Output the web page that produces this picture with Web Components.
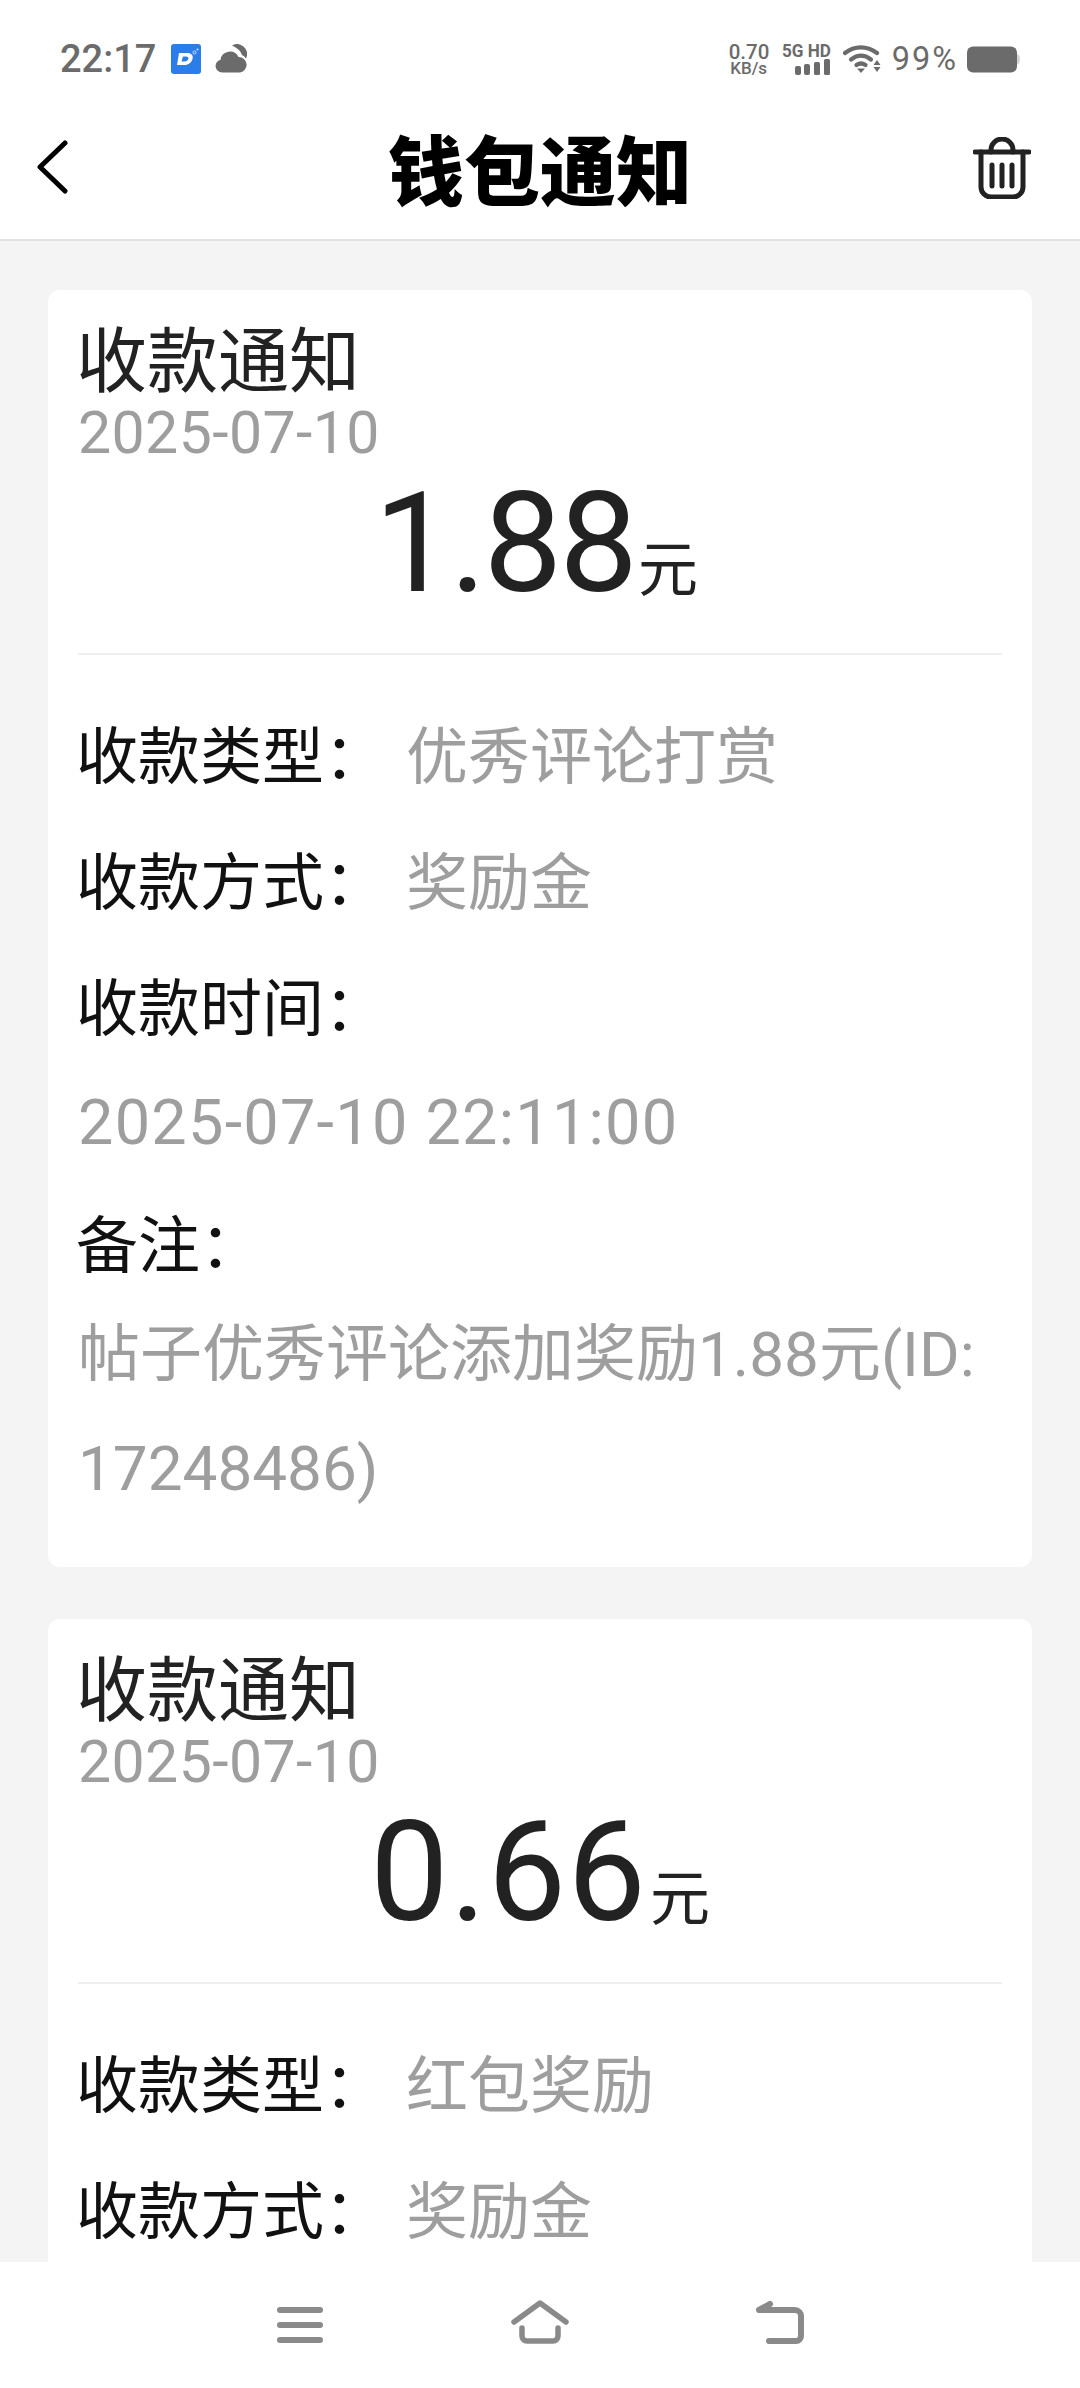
<!DOCTYPE html>
<html lang="zh">
<head>
<meta charset="utf-8">
<title>钱包通知</title>
<style>
  html, body { margin: 0; padding: 0; }
  body { width: 1080px; height: 2388px; overflow: hidden; font-family: Roboto, "Noto Sans CJK SC", sans-serif; }
  wallet-app { height: 2388px; }
</style>
</head>
<body>
<wallet-app>
  <status-bar slot="status"></status-bar>
  <app-header slot="header" title="钱包通知"></app-header>
  <notice-card amount="1.88" date="2025-07-10" tracking="-3px" nudge="8px">
    <notice-row label="收款类型：" value="优秀评论打赏"></notice-row>
    <notice-row label="收款方式：" value="奖励金"></notice-row>
    <notice-row label="收款时间："></notice-row>
    <notice-note wide>2025-07-10 22:11:00</notice-note>
    <notice-row label="备注："></notice-row>
    <notice-note tight>帖子优秀评论添加奖励1.88元(ID:17248486)</notice-note>
  </notice-card>
  <notice-card amount="0.66" date="2025-07-10" tracking="1px">
    <notice-row label="收款类型：" value="红包奖励"></notice-row>
    <notice-row label="收款方式：" value="奖励金"></notice-row>
  </notice-card>
  <nav-bar slot="nav"></nav-bar>
</wallet-app>

<script>
const CJK = `Roboto, "Noto Sans CJK SC", sans-serif`;

class WalletApp extends HTMLElement {
  constructor() {
    super();
    this.attachShadow({ mode: "open" });
    this.shadowRoot.innerHTML = `
      <style>
        :host { display: flex; flex-direction: column; background: #f4f4f4; }
        main {
          flex: 1;
          min-height: 0;
          overflow: hidden;
          padding: 49px 48px 0;
          display: flex;
          flex-direction: column;
          gap: 52px;
        }
      </style>
      <slot name="status"></slot>
      <slot name="header"></slot>
      <main><slot></slot></main>
      <slot name="nav"></slot>
    `;
  }
}

class StatusBar extends HTMLElement {
  constructor() {
    super();
    this.attachShadow({ mode: "open" });
    this.shadowRoot.innerHTML = `
      <style>
        :host {
          display: flex;
          height: 100px;
          box-sizing: border-box;
          padding: 18px 60px 0 60px;
          align-items: center;
          justify-content: space-between;
          background: #fff;
          color: #6b6b6b;
          font-family: Roboto, sans-serif;
        }
        .side { display: flex; align-items: center; }
        .time { font-size: 38px; font-weight: 500; }
        .app { margin-left: 15px; width: 30px; height: 30px; display: block; }
        .weather { margin-left: 14px; width: 32px; height: 30px; display: block; }
        .speed { width: 40px; font-size: 17px; font-weight: 500; line-height: 15px; text-align: center; white-space: nowrap; }
        .speed b { display: block; font-size: 20.500px; font-weight: 500; line-height: 18px; }
        .net { margin-left: 13px; width: 49px; }
        .net span { display: block; font-size: 18px; font-weight: 700; line-height: 16px; white-space: nowrap; transform: scaleX(.95); transform-origin: left; }
        .net svg { display: block; width: 49px; height: 16px; }
        .wifi { margin-left: 12px; width: 38px; height: 30px; display: block; }
        .pct { margin-left: 11px; font-size: 32.500px; letter-spacing: 2px; }
        .batt { margin-left: 9px; width: 53px; height: 27px; display: block; }
      </style>
      <div class="side">
        <span class="time">22:17</span>
        <svg class="app" viewBox="0 0 30 30">
          <rect width="30" height="30" rx="3" fill="#2b7de9"/>
          <path d="M8 9h8c4.500 0 6.500 2.500 5.500 6s-4 6-8 6H6zM12 12.500l-1.500 5h3c2 0 3.400-1 3.800-2.500s-.3-2.500-2.300-2.500z" fill="#fff" fill-rule="evenodd"/>
          <circle cx="23.500" cy="8.500" r="1.500" fill="none" stroke="#cfe6ff"/>
          <circle cx="26.500" cy="5.500" r="1" fill="#cfe6ff"/>
        </svg>
        <svg class="weather" viewBox="0 0 32 30" fill="#6b6b6b">
          <path d="M7 28.500a6.500 6.500 0 0 1-1.500-12.800A9.500 9.500 0 0 1 23.500 13a7.800 7.800 0 0 1 1.500 15.500z"/>
          <path d="M17 1.500a10 10 0 0 1 14 13q-1.500-2.500-4-3.500Q25 5 17 1.500z"/>
        </svg>
      </div>
      <div class="side">
        <div class="speed"><b>0.70</b>KB/s</div>
        <div class="net">
          <span>5G HD</span>
          <svg viewBox="0 0 49 16" fill="#6b6b6b">
            <rect x="13" y="7" width="6" height="9" rx="2"/>
            <rect x="22" y="5" width="6" height="11" rx="2"/>
            <rect x="32" y="3" width="6" height="13" rx="1.500"/>
            <rect x="42" y="0" width="6" height="16" rx="1.500"/>
          </svg>
        </div>
        <svg class="wifi" viewBox="0 0 38 30" fill="none" stroke="#6b6b6b" stroke-width="4.200" stroke-linecap="round">
          <path d="M2 9c9.500-7.500 22-7.500 32 0"/>
          <path d="M8 15.500c6.500-5 13.500-5 20 0"/>
          <path d="M13.500 21c3-2 6-2 9 0"/>
          <path d="M14 24.500h8l-4 4.500z" fill="#6b6b6b" stroke="none"/>
          <path d="M34 16l3.500 5h-7zM30.500 23h7l-3.500 5z" fill="#6b6b6b" stroke="none"/>
        </svg>
        <span class="pct">99%</span>
        <svg class="batt" viewBox="0 0 53 27">
          <rect width="50" height="26" y=".5" rx="6" fill="#6b6b6b"/>
          <path d="M50 8c2 .5 3 2.500 3 5.500s-1 4.500-3 5z" fill="#d4d4d4"/>
        </svg>
      </div>
    `;
  }
}

class AppHeader extends HTMLElement {
  constructor() {
    super();
    this.attachShadow({ mode: "open" });
    this.shadowRoot.innerHTML = `
      <style>
        :host {
          display: grid;
          grid-template-columns: 1fr auto 1fr;
          height: 141px;
          box-sizing: border-box;
          align-items: center;
          padding-bottom: 6px;
          background: #fff;
          border-bottom: 2px solid #e2e2e2;
        }
        h1 {
          margin: 0;
          font: 900 76px/1 "Noto Sans CJK SC", sans-serif;
          color: #000;
        }
        .back { width: 34px; height: 54px; display: block; margin-left: 36px; }
        .trash { width: 58px; height: 62px; display: block; margin: 2px 49px 0 0; justify-self: end; }
      </style>
      <svg class="back" viewBox="0 0 34 54" fill="none" stroke="#000" stroke-width="5" stroke-linecap="round" stroke-linejoin="round">
        <path d="M29 3L4 27l25 24"/>
      </svg>
      <h1>${this.getAttribute("title")}</h1>
      <svg class="trash" viewBox="0 0 58 62" fill="none" stroke="#222" stroke-width="5" stroke-linecap="round" stroke-linejoin="round">
        <path d="M2 15h54"/>
        <path d="M8 15v35a10 10 0 0 0 10 10h22a10 10 0 0 0 10-10V15"/>
        <path d="M18 15v-2a11 11 0 0 1 22 0v2"/>
        <path d="M19 28v21M29 28v21M39 28v21"/>
      </svg>
    `;
  }
}

class NoticeCard extends HTMLElement {
  constructor() {
    super();
    this.attachShadow({ mode: "open" });
    this.shadowRoot.innerHTML = `
      <style>
        :host {
          display: block;
          flex: none;
          background: #fff;
          border-radius: 12px;
          padding: 29px 30px 41px;
          font-family: ${CJK};
        }
        .title { font-size: 71px; line-height: 85px; color: #222; margin-left: -2px; }
        .date { font-size: 59px; line-height: 58px; color: #9e9e9e; letter-spacing: .4px; }
        .amount {
          display: flex;
          justify-content: center;
          align-items: baseline;
          font-size: 140px;
          line-height: 156px;
          color: #222;
          margin-top: 3px;
          padding-bottom: 4px;
          padding-right: ${this.getAttribute("nudge") || 0};
          border-bottom: 2px solid #efefef;
          margin-bottom: 34px;
        }
        .amount i { font-style: normal; letter-spacing: ${this.getAttribute("tracking") || 0}; }
        .amount span { font-size: 60px; margin-left: 3px; }
      </style>
      <div class="title">收款通知</div>
      <div class="date">${this.getAttribute("date")}</div>
      <div class="amount"><i>${this.getAttribute("amount")}</i><span>元</span></div>
      <slot></slot>
    `;
  }
}

class NoticeRow extends HTMLElement {
  constructor() {
    super();
    this.attachShadow({ mode: "open" });
    const value = this.getAttribute("value");
    this.shadowRoot.innerHTML = `
      <style>
        :host {
          display: flex;
          height: 126px;
          align-items: center;
          font-size: 62px;
          font-family: ${CJK};
          color: #111;
          white-space: nowrap;
          margin-left: -2px;
        }
        .label { width: 330px; }
        .value { color: #9e9e9e; }
      </style>
      <span class="label">${this.getAttribute("label")}</span>
      ${value ? `<span class="value">${value}</span>` : ""}
    `;
  }
}

class NoticeNote extends HTMLElement {
  constructor() {
    super();
    this.attachShadow({ mode: "open" });
    this.shadowRoot.innerHTML = `
      <style>
        :host {
          display: block;
          font-size: 62px;
          line-height: 114px;
          font-family: ${CJK};
          color: #9e9e9e;
          word-break: break-all;
        }
        :host([wide]) { font-size: 63px; letter-spacing: 1.250px; line-height: 111px; }
        :host([tight]) { margin-top: -6px; }
      </style>
      <slot></slot>
    `;
  }
}

class NavBar extends HTMLElement {
  constructor() {
    super();
    this.attachShadow({ mode: "open" });
    this.shadowRoot.innerHTML = `
      <style>
        :host {
          display: flex;
          flex: none;
          height: 126px;
          box-sizing: border-box;
          padding-top: 38px;
          background: #fff;
          justify-content: center;
          gap: 180px;
        }
        svg { width: 60px; height: 44px; display: block; }
      </style>
      <svg viewBox="0 0 60 44" fill="none" stroke="#8a8a8a" stroke-width="6" stroke-linecap="round" stroke-linejoin="round">
        <path d="M10 10h40M10 25h40M10 40h40"/>
      </svg>
      <svg viewBox="0 0 60 44" fill="none" stroke="#8a8a8a" stroke-width="5.500" stroke-linecap="round" stroke-linejoin="round">
        <path d="M4 22L30 3l26 19"/>
        <path d="M12 28v8a5 5 0 0 0 5 5h26a5 5 0 0 0 5-5v-8"/>
      </svg>
      <svg viewBox="0 0 60 44" fill="none" stroke="#8a8a8a" stroke-width="6" stroke-linecap="round" stroke-linejoin="round">
        <path d="M20 4L9 10h36a6 6 0 0 1 6 6v20a5 5 0 0 1-5 5H19"/>
      </svg>
    `;
  }
}

customElements.define("wallet-app", WalletApp);
customElements.define("status-bar", StatusBar);
customElements.define("app-header", AppHeader);
customElements.define("notice-card", NoticeCard);
customElements.define("notice-row", NoticeRow);
customElements.define("notice-note", NoticeNote);
customElements.define("nav-bar", NavBar);
</script>
</body>
</html>
